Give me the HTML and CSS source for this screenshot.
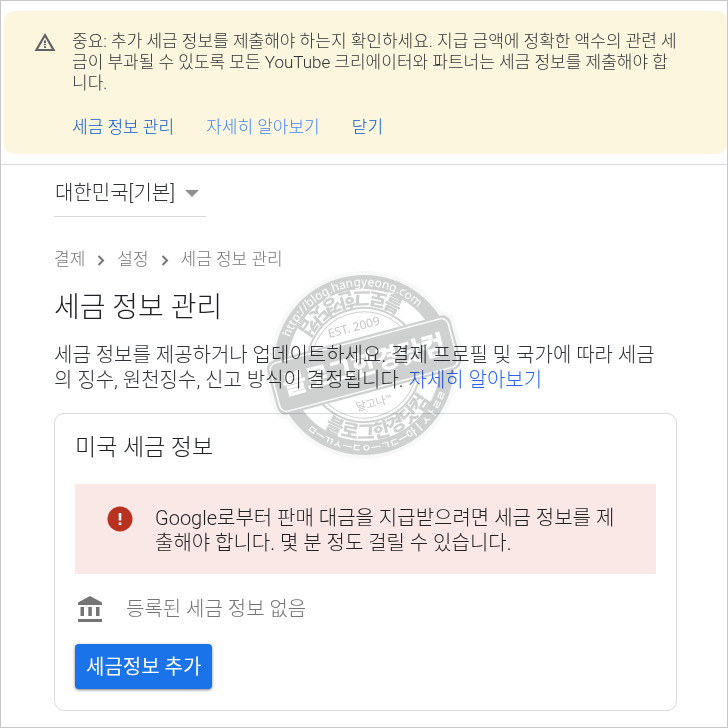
FILE: index.html
```html
<!DOCTYPE html>
<html lang="ko">
<head>
  <meta charset="UTF-8" />
  <meta name="viewport" content="width=device-width, initial-scale=1.0" />
  <title>세금 정보 관리</title>
  <link rel="stylesheet" href="styles.css">
</head>
<body>
  <div class="notice">
    <svg class="notice-icon" viewBox="0 0 24 24" width="24" height="24" aria-hidden="true">
      <path fill="#5f6368" fill-rule="evenodd" d="M12 2 L22.500 20 H1.500 Z M12 6.200 L5.200 17.900 H18.800 Z" />
      <path fill="#5f6368" d="M11 9.500h2v2.500h-2zM11 12.800h2v1.500h-2zM11 15.200h2v1.700h-2z" />
    </svg>
    <div class="notice-body">
      <p>중요: 추가 세금 정보를 제출해야 하는지 확인하세요. 지급 금액에 정확한 액수의 관련 세<br>금이 부과될 수 있도록 모든 YouTube 크리에이터와 파트너는 세금 정보를 제출해야 합<br>니다.</p>
      <div class="notice-links">
        <a href="#">세금 정보 관리</a>
        <a href="#" class="light">자세히 알아보기</a>
        <button type="button">닫기</button>
      </div>
    </div>
  </div>

  <main>
    <div class="region">
      <select aria-label="국가">
        <option>대한민국[기본]</option>
      </select>
      <svg viewBox="0 0 14 7" width="14" height="7" aria-hidden="true"><path fill="#8e8e8e" d="M0 0h14L7 7z" /></svg>
    </div>

    <nav class="breadcrumb">
      <a href="#">결제</a>
      <svg viewBox="0 0 8 12" width="8" height="12"><path d="M1.500 2 L6 6.500 L1.500 11" /></svg>
      <a href="#">설정</a>
      <svg viewBox="0 0 8 12" width="8" height="12"><path d="M1.500 2 L6 6.500 L1.500 11" /></svg>
      <span>세금 정보 관리</span>
    </nav>

    <h1>세금 정보 관리</h1>
    <p class="intro">세금 정보를 제공하거나 업데이트하세요. 결제 프로필 및 국가에 따라 세금<br>의 징수, 원천징수, 신고 방식이 결정됩니다. <a href="#">자세히 알아보기</a></p>

    <section class="card">
      <h2>미국 세금 정보</h2>
      <div class="alert">
        <svg viewBox="0 0 26 26" width="26" height="26" aria-hidden="true">
          <circle cx="13" cy="13" r="12.500" fill="#b93221" />
          <path fill="#fff" d="M11.700 7h2.600v7.500h-2.600zM11.700 16.500h2.600v2.500h-2.600z" />
        </svg>
        <p>Google로부터 판매 대금을 지급받으려면 세금 정보를 제출해야 합니다. 몇 분 정도 걸릴 수 있습니다.</p>
      </div>
      <div class="status">
        <svg viewBox="0 0 24 26" width="24" height="26" aria-hidden="true">
          <path fill="#757575" d="M12 0 L24 6.500 V9 H0 V6.500 Z M2.500 11h3.500v9H2.500z M10.300 11h3.500v9h-3.500z M18 11h3.500v9H18z M0 23h24v3H0z" />
        </svg>
        <span>등록된 세금 정보 없음</span>
      </div>
      <button type="button" class="add-button">세금정보 추가</button>
    </section>
  </main>

  <svg class="stamp" viewBox="-100 -100 200 200" width="200" height="200">
    <defs>
      <path id="ringTop" d="M-79 0 A79 79 0 0 1 79 0" />
      <path id="ringBottom" d="M-87 0 A87 87 0 0 0 87 0" />
      <path id="ringName" d="M-74 0 A74 74 0 0 0 74 0" />
    </defs>
    <g transform="rotate(-15)">
      <circle r="94" fill="#f8f8f8" />
      <rect x="-99" y="-32" width="198" height="64" rx="12" fill="#f8f8f8" />
      <circle r="90" fill="#cfd1d0" />
      <circle r="76" fill="#fff" />
      <circle r="57" fill="none" stroke="#cfd1d0" stroke-width="2" />
      <circle r="53" fill="none" stroke="#cfd1d0" stroke-width="1" />
      <text class="stamp-url"><textPath href="#ringTop" startOffset="51%">http://blog.hangyeong.com</textPath></text>
      <text class="stamp-jamo"><textPath href="#ringBottom" startOffset="50%">ㅁㅡㄲㅅㅡㄷㅇㅡㄱㄷㅡ아ㅣㅅㅏㄹㄹ</textPath></text>
      <text class="stamp-name"><textPath href="#ringName" startOffset="50%">블로그한경닷컴</textPath></text>
      <text class="stamp-name" transform="rotate(180)"><textPath href="#ringName" startOffset="50%">블로그한경닷컴</textPath></text>
      <text class="stamp-small" x="0" y="-35">EST. 2009</text>
      <rect x="-95" y="-28" width="190" height="56" rx="9" fill="#cfd1d0" />
      <rect x="-92" y="-25" width="184" height="50" rx="7" fill="none" stroke="#fff" stroke-width="1.500" />
      <text class="stamp-band" x="0" y="9">블로그한경닷컴</text>
      <text class="stamp-tm" x="0" y="43">달고나™</text>
    </g>
  </svg>
</body>
</html>
```
FILE: styles.css
```css
* {
  box-sizing: border-box;
}
body {
  margin: 0;
  min-height: 100vh;
  padding-top: 10px;
  border: 1px solid #c8c8c8;
  background: #fff;
  color: #303336;
  font-family: Roboto, "Noto Sans CJK KR", sans-serif;
  font-weight: 300;
  font-size: 20px;
  line-height: 25px;
  position: relative;
}
p, h1, h2 {
  margin: 0;
  font-weight: 300;
}
a {
  color: #2962ff;
  text-decoration: none;
}
button, select {
  font-family: inherit;
  font-weight: inherit;
}
.notice {
  display: flex;
  gap: 15px;
  margin-left: 3px;
  padding: 20px 20px 16px 29px;
  border-radius: 10px;
  background: #fdf6de;
  font-size: 17px;
  line-height: 21px;
}
.notice-icon {
  flex: none;
}
.notice-links {
  display: flex;
  gap: 32px;
  margin-top: 23px;
}
.notice-links a, .notice-links button {
  padding: 0;
  border: 0;
  background: none;
  color: #0b57d0;
  font-size: 17px;
  line-height: 21px;
}
.notice-links .light {
  color: #4285f4;
}
main {
  margin-top: 10px;
  padding: 8px 50px 16px 53px;
  border-top: 1px solid #dadce0;
}
.region {
  position: relative;
  width: 152px;
  border-bottom: 1px solid #dadada;
}
.region select {
  display: block;
  width: 100%;
  height: 43px;
  padding: 0 0 4px 1px;
  border: 0;
  appearance: none;
  background: none;
  color: #303336;
  font-size: 20px;
}
.region svg {
  position: absolute;
  right: 7px;
  top: 17px;
  pointer-events: none;
}
.breadcrumb {
  display: flex;
  align-items: center;
  gap: 12px;
  margin-top: 30px;
  font-size: 17px;
  color: #757575;
}
.breadcrumb a {
  color: #757575;
}
.breadcrumb path {
  fill: none;
  stroke: #757575;
  stroke-width: 2;
}
h1 {
  margin-top: 18px;
  font-size: 28px;
  line-height: 36px;
  color: #202124;
}
.intro {
  margin-top: 17px;
}
.card {
  margin-top: 20px;
  padding: 20px 20px 21px;
  border: 1px solid #dadce0;
  border-radius: 10px;
}
h2 {
  font-size: 23px;
  line-height: 28px;
  color: #202124;
}
.alert {
  display: flex;
  gap: 22px;
  margin-top: 22px;
  padding: 22px 32px 18px;
  background: #fae8e6;
  color: #202124;
}
.alert svg {
  flex: none;
}
.status {
  display: flex;
  align-items: center;
  gap: 24px;
  margin-top: 22px;
  padding-left: 3px;
  color: #757575;
}
.add-button {
  display: block;
  height: 45px;
  margin-top: 22px;
  padding: 0 11px 2px;
  border: 0;
  border-radius: 4px;
  background: #1a73e8;
  box-shadow: 0 1px 3px rgba(0, 0, 0, 0.5);
  color: #fff;
  font-size: 20px;
  font-weight: 400;
}

/* stamp lies over the page, text below stays readable */
.stamp {
  position: absolute;
  left: 50%;
  top: 264px;
  margin-left: -100px;
  mix-blend-mode: multiply;
  pointer-events: none;
}
.stamp text {
  text-anchor: middle;
}
.stamp-url {
  font-family: "Noto Sans", sans-serif;
  font-size: 12px;
  font-weight: 400;
  fill: #fff;
}
.stamp-jamo {
  font-size: 11px;
  font-weight: 500;
  fill: #fff;
}
.stamp-name {
  font-size: 19px;
  font-weight: 900;
  fill: #cfd1d0;
}
.stamp-band {
  font-size: 26px;
  font-weight: 900;
  fill: #fff;
}
.stamp-small {
  font-family: "Noto Sans", sans-serif;
  font-size: 12px;
  font-weight: 400;
  fill: #c4c6c5;
}
.stamp-tm {
  font-size: 11px;
  font-weight: 400;
  fill: #c4c6c5;
}
```
